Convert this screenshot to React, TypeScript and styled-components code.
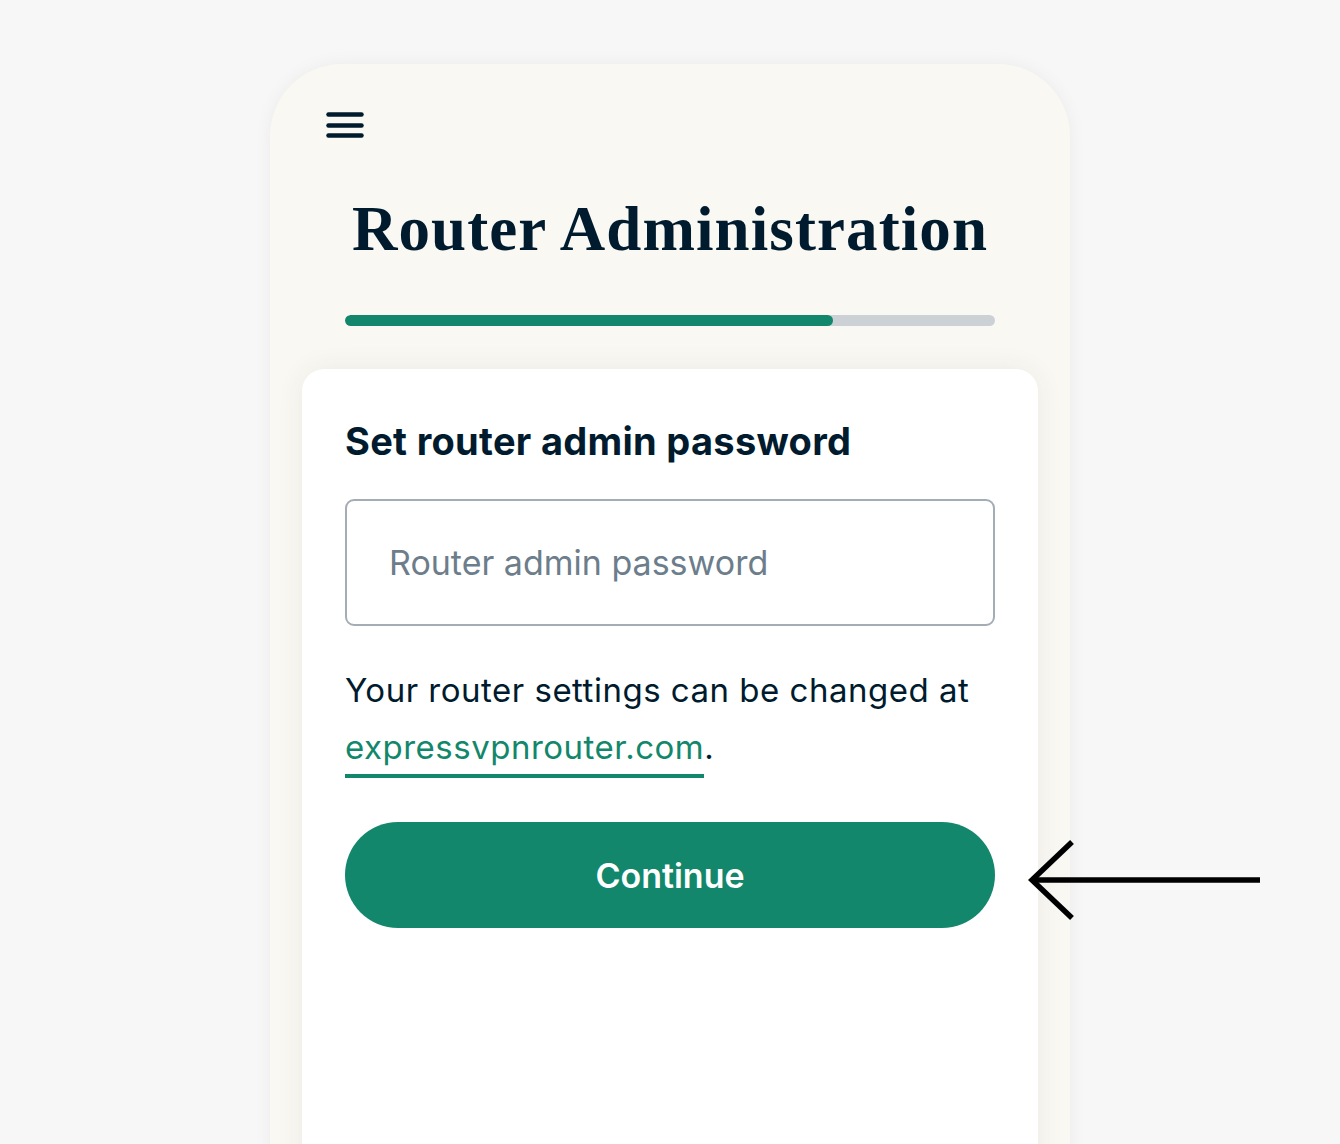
import React from 'react';
import styled, { createGlobalStyle } from 'styled-components';

const GlobalStyle = createGlobalStyle`
  html, body {
    margin: 0;
    padding: 0;
    background: #f7f7f7;
    overflow: hidden;
  }
  * {
    box-sizing: border-box;
  }
`;

const Page = styled.div`
  position: relative;
  height: 100vh;
  display: flex;
  justify-content: center;
  padding-top: 64px;
  font-family: Inter, "Noto Sans", sans-serif;
  color: #001b2e;
`;

const Frame = styled.div`
  width: 800px;
  min-height: 1140px;
  display: flex;
  flex-direction: column;
  background: #f9f8f3;
  border-radius: 72px 72px 0 0;
  box-shadow: 0 0 18px rgba(0, 0, 0, 0.05);
  padding-top: 48px;
`;

const MenuButton = styled.button`
  align-self: flex-start;
  margin-left: 56px;
  padding: 0;
  border: none;
  background: none;
  width: 38px;
  height: 26px;
  display: flex;
  cursor: pointer;
`;

const Title = styled.h1`
  margin: 55px 0 0;
  text-align: center;
  font-family: "Liberation Serif", "Times New Roman", serif;
  font-weight: 700;
  font-size: 63px;
  line-height: 72px;
  letter-spacing: 1.1px;
  color: #001b2e;
`;

const Progress = styled.div`
  margin: 50px 75px 0;
  height: 11px;
  border-radius: 6px;
  background: #ccd1d5;
  overflow: hidden;
`;

const ProgressFill = styled.div`
  height: 100%;
  border-radius: 6px;
  background: #12876c;
`;

const Card = styled.div`
  flex: 1;
  margin: 43px 32px 0;
  background: #ffffff;
  border-radius: 22px 22px 0 0;
  box-shadow: 0 0 28px rgba(60, 50, 20, 0.07);
  padding: 50px 43px 0;
  display: flex;
  flex-direction: column;
`;

const CardTitle = styled.h2`
  margin: 0;
  font-weight: 700;
  font-size: 38px;
  line-height: 44px;
  letter-spacing: 0.3px;
  color: #001b2e;
`;

const PasswordInput = styled.input`
  margin-top: 36px;
  width: 100%;
  height: 127px;
  border: 2px solid #a4adb6;
  border-radius: 9px;
  padding: 0 42px;
  font-family: Inter, "Noto Sans", sans-serif;
  font-size: 34px;
  color: #001b2e;
  background: #fff;
  outline: none;
  &::placeholder {
    color: #6c7d8b;
  }
`;

const Note = styled.p`
  margin: 36px 0 0;
  font-size: 33px;
  line-height: 57px;
  letter-spacing: 0.5px;
  color: #001b2e;
`;

const Link = styled.a`
  color: #12876c;
  text-decoration: none;
  padding-bottom: 7px;
  border-bottom: 4px solid #12876c;
`;

const ContinueButton = styled.button`
  margin-top: 46px;
  width: 100%;
  height: 106px;
  border: none;
  border-radius: 53px;
  background: #12876c;
  color: #ffffff;
  font-family: Inter, "Noto Sans", sans-serif;
  font-weight: 600;
  font-size: 34px;
  cursor: pointer;
`;

const Pointer = styled.svg`
  position: absolute;
  left: 1024px;
  top: 838px;
`;

const progress = 0.75;

export default function App() {
  return (
    <>
      <GlobalStyle />
      <Page>
        <Frame>
          <MenuButton aria-label="Menu">
            <svg width="38" height="26" viewBox="0 0 38 26">
              <g stroke="#001b2e" strokeWidth="4.5" strokeLinecap="round">
                <line x1="2.5" y1="2.5" x2="35.5" y2="2.5" />
                <line x1="2.5" y1="13.5" x2="35.5" y2="13.5" />
                <line x1="2.5" y1="23.5" x2="35.5" y2="23.5" />
              </g>
            </svg>
          </MenuButton>
          <Title>Router Administration</Title>
          <Progress>
            <ProgressFill style={{ width: `${progress * 100}%` }} />
          </Progress>
          <Card>
            <CardTitle>Set router admin password</CardTitle>
            <PasswordInput type="password" placeholder="Router admin password" />
            <Note>
              Your router settings can be changed at{' '}
              <Link href="#">expressvpnrouter.com</Link>.
            </Note>
            <ContinueButton type="button">Continue</ContinueButton>
          </Card>
        </Frame>
        <Pointer width="240" height="84" viewBox="0 0 240 84">
          <g stroke="#000" strokeWidth="5.5" fill="none">
            <line x1="8" y1="42" x2="236" y2="42" />
            <polyline points="48,4 8,42 48,80" />
          </g>
        </Pointer>
      </Page>
    </>
  );
}
